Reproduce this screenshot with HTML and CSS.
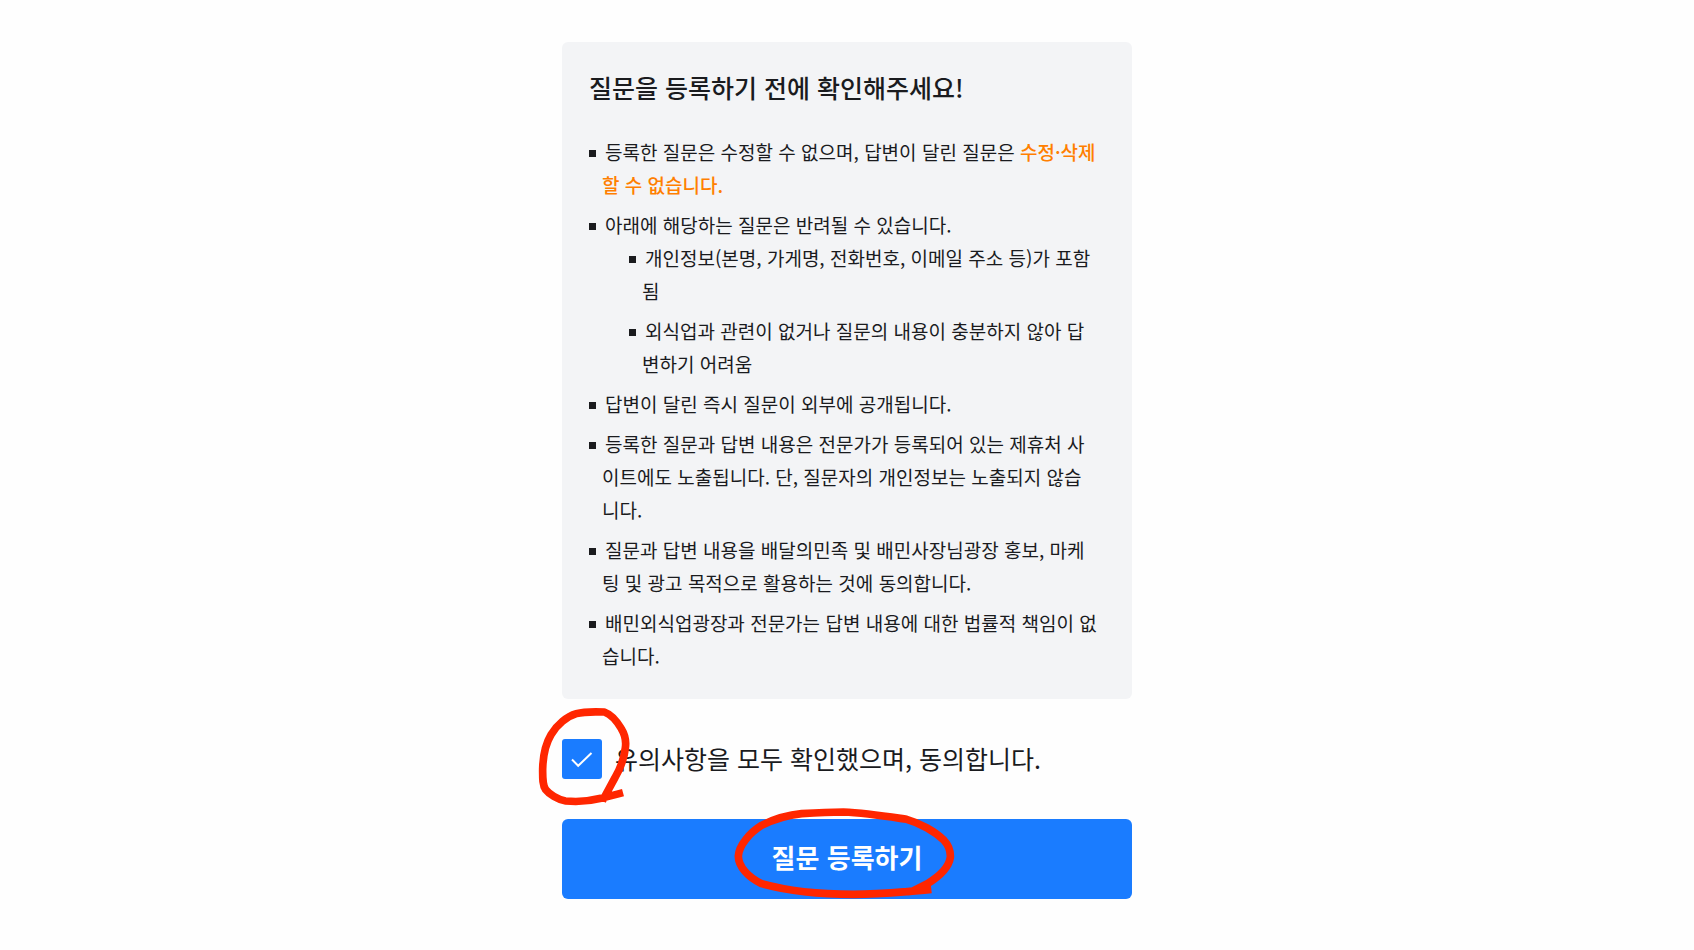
FILE: index.html
```
<!DOCTYPE html>
<html lang="ko">
<head>
    <meta charset="UTF-8">
    <meta name="viewport" content="width=device-width, initial-scale=1.0">
    <title>질문 등록하기</title>
    <link rel="stylesheet" href="styles.css">
</head>
<body>
    <main class="container">
        <section class="notice">
            <h1>질문을 등록하기 전에 확인해주세요!</h1>
            <ul class="notice-list">
                <li>등록한 질문은 수정할 수 없으며, 답변이 달린 질문은 <strong>수정·삭제<br>할 수 없습니다.</strong></li>
                <li>아래에 해당하는 질문은 반려될 수 있습니다.
                    <ul class="notice-sublist">
                        <li>개인정보(본명, 가게명, 전화번호, 이메일 주소 등)가 포함<br>됨</li>
                        <li>외식업과 관련이 없거나 질문의 내용이 충분하지 않아 답<br>변하기 어려움</li>
                    </ul>
                </li>
                <li>답변이 달린 즉시 질문이 외부에 공개됩니다.</li>
                <li>등록한 질문과 답변 내용은 전문가가 등록되어 있는 제휴처 사<br>이트에도 노출됩니다. 단, 질문자의 개인정보는 노출되지 않습<br>니다.</li>
                <li>질문과 답변 내용을 배달의민족 및 배민사장님광장 홍보, 마케<br>팅 및 광고 목적으로 활용하는 것에 동의합니다.</li>
                <li>배민외식업광장과 전문가는 답변 내용에 대한 법률적 책임이 없<br>습니다.</li>
            </ul>
        </section>

        <form class="question-form">
            <div class="agree">
                <input type="checkbox" id="agree" class="agree-input" checked>
                <svg class="agree-check" viewBox="0 0 40 40" aria-hidden="true">
                    <path d="M10 20.5l6.2 6.3L29.5 14"/>
                </svg>
                <label for="agree" class="agree-label">유의사항을 모두 확인했으며, 동의합니다.</label>
                <svg class="mark mark-agree" viewBox="7 43 300 315" aria-hidden="true">
                    <path d="M280 309C250 317 232 321 214 326C175 336 130 336 108 334C85 331 58 313 48 300C38 286 39 262 39 238C40 200 46 165 64 135C82 105 112 80 140 72C165 65 200 66 224 67C244 74 262 95 275 117C286 135 290 155 287 175C283 210 270 240 256 264L218 334"/>
                </svg>
            </div>
            <div class="submit">
                <button type="submit" class="submit-button">질문 등록하기</button>
                <svg class="mark mark-submit" viewBox="36 42 690 300" aria-hidden="true">
                    <path d="M634 298C600 302 575 303 560 305C510 309 460 313 400 313C290 313 200 302 125 281C85 262 55 230 55 198C57 165 90 128 125 106C165 86 205 75 245 71C290 68 330 66 370 66C440 69 500 79 560 88C600 99 645 125 672 151C688 168 692 182 691 202C686 235 650 264 622 281L576 304"/>
                </svg>
            </div>
        </form>
    </main>
</body>
</html>
```
FILE: styles.css
```
* {
    box-sizing: border-box;
}
body {
    margin: 0;
    padding: 42px 20px;
    background-color: #fefefe;
    color: #1a1b1e;
    font-family: "Noto Sans CJK KR", sans-serif;
}
.container {
    max-width: 570px;
    margin: 0 auto;
}
.notice {
    padding: 27px 20px 27px 27px;
    border-radius: 6px;
    background-color: #f3f4f6;
}
h1 {
    margin: 0 0 30px;
    font-size: 25px;
    line-height: 36px;
    font-weight: 500;
}
.notice-list,
.notice-sublist {
    margin: 0;
    padding: 0;
    list-style: none;
    font-size: 19px;
    line-height: 33px;
}
.notice-sublist {
    padding-left: 27px;
}
.notice li {
    padding-left: 13px;
    text-indent: -13px;
}
.notice li + li {
    margin-top: 7px;
}
.notice li::before {
    content: "";
    display: inline-block;
    width: 7px;
    height: 7px;
    margin-right: 9px;
    vertical-align: 3px;
    background-color: #1a1b1e;
}
.notice strong {
    color: #ff7f00;
    font-weight: 500;
}
.agree {
    position: relative;
    display: flex;
    align-items: center;
    margin: 40px 0;
}
.agree-input {
    appearance: none;
    width: 40px;
    height: 40px;
    margin: 0;
    border-radius: 3px;
    background-color: #1a7cff;
}
.agree-check {
    position: absolute;
    top: 0;
    left: 0;
    width: 40px;
    height: 40px;
    fill: none;
    stroke: #fff;
    stroke-width: 2;
    pointer-events: none;
    visibility: hidden;
}
.agree-input:checked + .agree-check {
    visibility: visible;
}
.agree-label {
    margin-left: 13px;
    padding-bottom: 2px;
    font-size: 25px;
    line-height: 38px;
}
.submit {
    position: relative;
}
.submit-button {
    display: block;
    width: 100%;
    padding: 18px 20px 22px;
    border: none;
    border-radius: 6px;
    background-color: #1a7cff;
    color: #fff;
    font-family: inherit;
    font-size: 26px;
    line-height: 40px;
    font-weight: 700;
    cursor: pointer;
}
/* hand-drawn red circles */
.mark {
    position: absolute;
    fill: none;
    stroke: #ff2600;
    stroke-width: 23;
    stroke-linejoin: bevel;
    pointer-events: none;
}
.mark-agree {
    top: -35px;
    left: -30px;
    width: 100px;
    height: 105px;
}
.mark-submit {
    top: -15px;
    left: 50%;
    width: 230px;
    height: 100px;
    transform: translateX(-50%);
}
```
